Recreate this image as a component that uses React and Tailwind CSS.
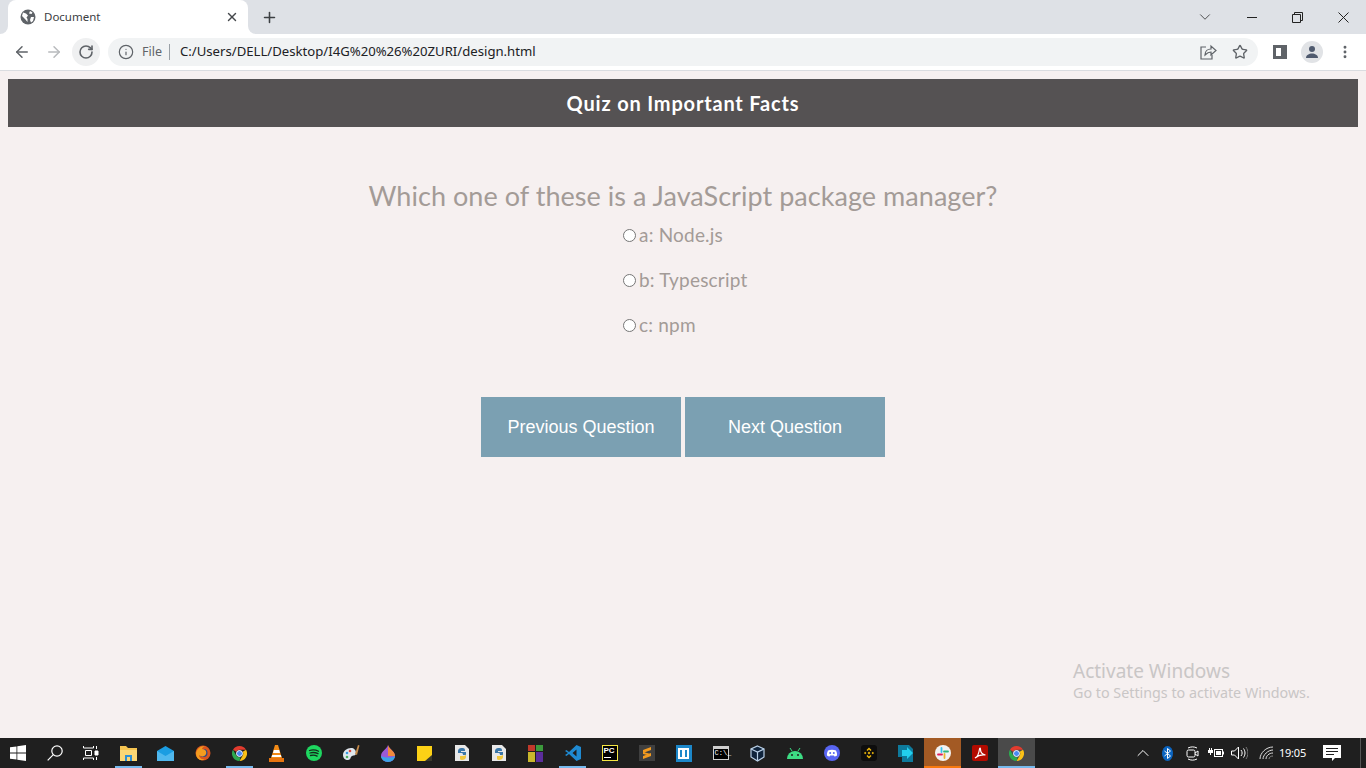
import { ArrowLeft, ArrowRight, RotateCw, Info, Star, X, Plus, ChevronDown, ChevronUp, MoreVertical } from 'lucide-react';

const ChromeLogo = ({ size = 16 }) => (
  <svg width={size} height={size} viewBox="0 0 16 16">
    <path d="M8 0a8 8 0 0 1 6.93 4H8a4 4 0 0 0-3.46 2L1.07 4A8 8 0 0 1 8 0z" fill="#e33b2e" />
    <path d="M14.93 4A8 8 0 0 1 8 16l3.46-6A4 4 0 0 0 11.46 6z" fill="#fbc116" />
    <path d="M8 16A8 8 0 0 1 1.07 4l3.47 6A4 4 0 0 0 9 11.87z" fill="#2da94f" />
    <circle cx="8" cy="8" r="3.2" fill="#4a8af4" stroke="#fff" strokeWidth="1" />
  </svg>
);

const PythonFile = () => (
  <svg width="16" height="18" viewBox="0 0 16 18">
    <path d="M1 1h10l4 4v12H1z" fill="#e8e8e8" />
    <path d="M4 8c0-3 1-4 4-4s3 1 3 3H7v1h5v3H9c0-2-1-2-2-2H4z" fill="#3b77a8" />
    <path d="M6 12h3c2 0 3-1 3-2v3c0 2-2 3-4 3s-2-1-2-2z" fill="#f2c83c" />
  </svg>
);

const taskIcons = [
  { key: 'explorer', bar: true, icon: (
    <svg width="17" height="15" viewBox="0 0 17 15"><path d="M0 0h6l2 2h9v13H0z" fill="#f5c451" /><path d="M0 4h17v11H0z" fill="#fbd775" /><path d="M5 9h7v6H5z" fill="#2d8fd5" /><path d="M7 11h3v4H7z" fill="#fbd775" /></svg>
  ) },
  { key: 'mail', icon: (
    <svg width="17" height="15" viewBox="0 0 17 15"><path d="M0 5l8.5-5L17 5v10H0z" fill="#1b9de2" /><path d="M0 5l8.5 5L17 5v10H0z" fill="#50b8ee" /></svg>
  ) },
  { key: 'firefox', icon: (
    <svg width="16" height="16" viewBox="0 0 16 16"><circle cx="8" cy="8" r="7.5" fill="#d9541e" /><circle cx="8.5" cy="8" r="4" fill="#2d4a86" /><path d="M1 8c1-4 4-7 9-7-2 1-3 2-3 3 3 0 5 2 4 5-1 3-5 3-7 1 0 3 3 5 6 4-4 3-9 0-9-6z" fill="#f39c1f" /></svg>
  ) },
  { key: 'chrome', bar: true, icon: <ChromeLogo size={15} /> },
  { key: 'vlc', icon: (
    <svg width="15" height="17" viewBox="0 0 15 17"><path d="M6 0h3l4 13H2z" fill="#f28a16" /><path d="M4.8 5h5.4l.8 3H4z" fill="#fff" /><path d="M0 13h15v4H0z" fill="#e8750f" /><path d="M3.2 10h8.6l.6 2H2.6z" fill="#fff" /></svg>
  ) },
  { key: 'spotify', icon: (
    <svg width="16" height="16" viewBox="0 0 16 16"><circle cx="8" cy="8" r="8" fill="#1ed760" /><path d="M3.5 5.5c3-1 6-.8 9 .8M4 8c2.6-.8 5.4-.6 8 .7M4.5 10.5c2.2-.6 4.5-.5 6.6.6" fill="none" stroke="#14291c" strokeWidth="1.3" strokeLinecap="round" /></svg>
  ) },
  { key: 'paint', icon: (
    <svg width="18" height="17" viewBox="0 0 18 17"><path d="M1 10c0-4 4-7 8-7 3 0 5 2 5 5s-2 2-4 3-1 4-4 4-5-2-5-5z" fill="#dfe7ee" /><circle cx="5" cy="8" r="1.3" fill="#3b9ae0" /><circle cx="8" cy="6" r="1.3" fill="#e0483c" /><circle cx="5" cy="12" r="1.3" fill="#4db060" /><path d="M13 9l3-9 1.5.5L15 10z" fill="#c58a4a" /></svg>
  ) },
  { key: 'drop', icon: (
    <svg width="14" height="17" viewBox="0 0 14 17"><path d="M7 0c1 4 7 6 7 11a7 6 0 0 1-14 0C0 6 6 4 7 0z" fill="#9c5ad6" /><path d="M7 0c1 4 7 6 7 11H7z" fill="#f08a3c" /><path d="M0 11a7 6 0 0 0 14 0c-4 2-9 2-14 0z" fill="#3aa5e8" /></svg>
  ) },
  { key: 'notes', icon: (
    <svg width="15" height="15" viewBox="0 0 15 15"><path d="M0 0h15v15H0z" fill="#fcd116" /><path d="M15 9v6H8z" fill="#3a3a2c" /></svg>
  ) },
  { key: 'py1', icon: <PythonFile /> },
  { key: 'py2', icon: <PythonFile /> },
  { key: 'winrar', icon: (
    <svg width="15" height="17" viewBox="0 0 15 17"><path d="M0 0h7v6H0z" fill="#c0392b" /><path d="M8 0h7v6H8z" fill="#3c9a3c" /><path d="M0 7h7v10H0z" fill="#c9b72c" /><path d="M8 7h7v10H8z" fill="#5b2d9c" /></svg>
  ) },
  { key: 'vscode', bar: true, icon: (
    <svg width="16" height="16" viewBox="0 0 16 16"><path d="M11.5 0L16 2v12l-4.5 2L4 9l-2.500 2L0 10l3-2-3-2 1.500-1L4 7zM11.5 4.500L7.500 8l4 3.500z" fill="#1f8ad2" /></svg>
  ) },
  { key: 'pycharm', icon: (
    <div className="w-[16px] h-[16px] bg-black border border-[#f5e642] flex flex-col pl-[1px] text-white text-[8px] leading-[9px] font-bold font-['Liberation_Sans',sans-serif]">
      PC
      <span className="block w-[7px] h-[1px] mt-[2px] bg-white"></span>
    </div>
  ) },
  { key: 'sublime', icon: (
    <div className="w-[16px] h-[16px] bg-[#3f3f3f] flex items-center justify-center">
      <svg width="8" height="12" viewBox="0 0 8 12"><path d="M0 3l8-3v3L0 6zM0 9l8-3v3l-8 3zM0 5l8 2v2L0 7z" fill="#f29a1f" /></svg>
    </div>
  ) },
  { key: 'bracket', icon: (
    <div className="w-[16px] h-[17px] bg-[#1c87c9] flex items-center justify-center">
      <div className="w-[11px] h-[11px] border-2 border-white flex justify-center"><span className="w-[3px] bg-white"></span></div>
    </div>
  ) },
  { key: 'cmd', icon: (
    <div className="w-[16px] h-[14px] bg-black border border-[#cfcfcf] border-t-[3px] text-white text-[7px] leading-[9px] pl-[1px] font-['Liberation_Mono',monospace]">C:\_</div>
  ) },
  { key: 'vbox', icon: (
    <svg width="15" height="17" viewBox="0 0 15 17"><path d="M7.5 1L14 4v8l-6.500 4L1 12V4z" fill="#10243c" stroke="#b8cfe6" strokeWidth="1.2" /><path d="M1 4l6.500 3L14 4M7.500 7v9" fill="none" stroke="#b8cfe6" strokeWidth="1.2" /></svg>
  ) },
  { key: 'android', icon: (
    <svg width="16" height="12" viewBox="0 0 16 12"><path d="M0 12a8 8 0 0 1 16 0z" fill="#3ddc84" /><path d="M3 1l2 3M13 1l-2 3" stroke="#3ddc84" strokeWidth="1" /><circle cx="5" cy="8" r="1" fill="#1f1f1f" /><circle cx="11" cy="8" r="1" fill="#1f1f1f" /></svg>
  ) },
  { key: 'discord', icon: (
    <svg width="16" height="16" viewBox="0 0 16 16"><circle cx="8" cy="8" r="8" fill="#5865f2" /><path d="M4 5.500c2.500-1 5.500-1 8 0 1 2 1.200 3.500 1 5-1 .7-2 1-2.500 1l-.6-1H6.100l-.6 1c-.5 0-1.500-.3-2.500-1-.2-1.500 0-3 1-5z" fill="#fff" /><circle cx="6.200" cy="8" r="1" fill="#5865f2" /><circle cx="9.800" cy="8" r="1" fill="#5865f2" /></svg>
  ) },
  { key: 'binance', icon: (
    <svg width="16" height="16" viewBox="0 0 16 16"><rect width="16" height="16" rx="3" fill="#0d0d0d" /><path d="M8 2.500l2.500 2.500-1 1L8 4.500 6.500 6l-1-1zM8 13.500L5.500 11l1-1L8 11.500 9.500 10l1 1zM3 8l1.200-1.200L5.400 8 4.200 9.200zM10.600 8l1.200-1.200L13 8l-1.200 1.200zM8 6.600L9.400 8 8 9.400 6.600 8z" fill="#f0b90b" /></svg>
  ) },
  { key: 'ms', icon: (
    <svg width="15" height="17" viewBox="0 0 15 17"><path d="M0 0h11l4 4v13H4V12H0z" fill="#0e7a9c" /><path d="M4 5h5V2l6 6-6 6v-3H4z" fill="#22d0ee" /></svg>
  ) },
  { key: 'slack', active: 'bg-[#a35a24]', line: 'bg-[#f7780f]', icon: (
    <svg width="16" height="16" viewBox="0 0 16 16"><circle cx="8" cy="8" r="8" fill="#f2f2f2" /><path d="M6.500 3v4" stroke="#36c5f0" strokeWidth="1.800" strokeLinecap="round" /><path d="M13 6.500H9" stroke="#2eb67d" strokeWidth="1.800" strokeLinecap="round" /><path d="M9.500 13V9" stroke="#ecb22e" strokeWidth="1.800" strokeLinecap="round" /><path d="M3 9.500h4" stroke="#e01e5a" strokeWidth="1.800" strokeLinecap="round" /></svg>
  ) },
  { key: 'acrobat', icon: (
    <div className="w-[16px] h-[16px] rounded-[2px] bg-[#b30b00] flex items-center justify-center">
      <svg width="12" height="12" viewBox="0 0 12 12"><path d="M1 11c2-1 4-5 4.500-9 .2-1.500 1-1 1 .5 0 3 2 5 5 5.500-3-.5-7 0-10.500 3z" fill="none" stroke="#fff" strokeWidth="1.200" /></svg>
    </div>
  ) },
  { key: 'chrome2', active: 'bg-[#4a4a4a]', line: 'bg-[#76b9ed]', icon: <ChromeLogo size={15} /> },
];

const App = () => {
  return (
    <div className="relative h-[768px] w-[1366px] overflow-hidden flex flex-col bg-[#f6f0f0] font-['Noto_Sans',sans-serif]">
      {/* tab strip */}
      <div className="h-[34px] bg-[#dee1e6] flex shrink-0">
        <div className="relative ml-[8px] w-[240px] h-[34px] bg-white rounded-t-[8px] flex items-center pl-[12px] pr-[9px] text-[#3c4043]">
          <span className="absolute left-[-8px] bottom-0 w-[8px] h-[8px] bg-white">
            <span className="block w-[8px] h-[8px] bg-[#dee1e6] rounded-br-[8px]"></span>
          </span>
          <span className="absolute right-[-8px] bottom-0 w-[8px] h-[8px] bg-white">
            <span className="block w-[8px] h-[8px] bg-[#dee1e6] rounded-bl-[8px]"></span>
          </span>
          <svg width="16" height="16" viewBox="0 0 16 16" className="mr-[8px]">
            <circle cx="8" cy="8" r="7.500" fill="#5f6368" />
            <path d="M3 3.500l3 1 2 2-1.500 2 1 1.500v3L5 10 2 7zM10 2l2.500 1.500-1 1.500-2.500-.5zM11 8h3l-1 4-2 1.500-1-2.500z" fill="#fff" />
          </svg>
          <span className="text-[11.5px] leading-none flex-1">Document</span>
          <X size={14} strokeWidth={2.4} className="text-[#45484c]" />
        </div>
        <div className="ml-[13px] flex items-center"><Plus size={17} strokeWidth={2.2} className="text-[#3c4043]" /></div>
        <div className="ml-auto flex items-center text-[#222]">
          <div className="w-[46px] flex justify-center"><ChevronDown size={18} strokeWidth={1} /></div>
          <div className="w-[46px] flex justify-center"><span className="w-[10px] h-[1px] bg-[#222] ml-[1px]"></span></div>
          <div className="w-[46px] flex justify-center">
            <svg width="11" height="11" viewBox="0 0 11 11" fill="none" stroke="#222"><path d="M.5 2.500h8v8h-8zM2.500 2.500V.5h8v8H8.500" /></svg>
          </div>
          <div className="w-[46px] flex justify-center">
            <svg width="11" height="11" viewBox="0 0 11 11" fill="none" stroke="#222"><path d="M.5.5l10 10M10.500.5l-10 10" /></svg>
          </div>
        </div>
      </div>

      {/* toolbar */}
      <div className="h-[37px] bg-white border-b border-[#dadce0] flex items-center shrink-0 pb-[1px]">
        <ArrowLeft size={18} strokeWidth={2} className="ml-[13px] text-[#5f6368]" />
        <ArrowRight size={18} strokeWidth={2} className="ml-[14px] text-[#b8babd]" />
        <div className="ml-[9px] w-[28px] h-[28px] rounded-full bg-[#eff0f1] flex items-center justify-center">
          <RotateCw size={16} strokeWidth={2.4} className="text-[#5f6368]" />
        </div>
        <div className="ml-[8px] w-[1150px] h-[28px] rounded-full bg-[#f1f3f4] flex items-center pl-[10px] pr-[10px]">
          <Info size={16} strokeWidth={1.8} className="text-[#5f6368]" />
          <span className="ml-[8px] pt-[1px] text-[12.5px] text-[#5f6368]">File</span>
          <span className="ml-[7px] w-[1px] h-[16px] bg-[#9aa0a6]"></span>
          <span className="ml-[10px] pt-[1px] text-[13.15px] text-[#202124]">C:/Users/DELL/Desktop/I4G%20%26%20ZURI/design.html</span>
          <div className="ml-auto flex items-center gap-[15px]">
            <svg width="17" height="16" viewBox="0 0 17 16" fill="none" stroke="#5f6368" strokeWidth="1.2"><path d="M6 3H1v12h11v-4" /><path d="M5 11c0-4 3-6 6-6V2l5 4.500-5 4.500V8c-3 0-4 1-6 3z" /></svg>
            <Star size={16} strokeWidth={2} className="text-[#5f6368]" />
          </div>
        </div>
        <div className="ml-[15px] w-[14px] h-[14px] border-[3px] border-[#5f6368] border-r-[6px]"></div>
        <div className="ml-[14px] w-[22px] h-[22px] rounded-full bg-[#e1e3e6] flex items-center justify-center">
          <svg width="14" height="14" viewBox="0 0 14 14" fill="#4f5a6e"><circle cx="7" cy="4" r="3" /><path d="M1 13c0-3 3-4.500 6-4.500s6 1.500 6 4.500z" /></svg>
        </div>
        <MoreVertical size={16} strokeWidth={2.4} className="ml-[14px] text-[#5f6368]" />
      </div>

      {/* page */}
      <div className="flex-1 pt-[8px] px-[8px] flex flex-col items-center">
        <div className="w-full h-[48px] bg-[#555253] flex items-center justify-center text-white text-[20px] font-['Lato',sans-serif] font-bold tracking-[0.82px]">
          Quiz on Important Facts
        </div>
        <h1 className="mt-[50px] text-[#a39b97] text-[27px] leading-[38px] font-['Lato',sans-serif] tracking-[0.04px]">
          Which one of these is a JavaScript package manager?
        </h1>
        <div className="w-[120px] flex flex-col gap-[19px] mt-[7px] text-[#a39b97] text-[19px] leading-[26px] tracking-[0.2px] font-['Lato',sans-serif]">
          {['a: Node.js', 'b: Typescript', 'c: npm'].map((label) => (
            <label key={label} className="flex items-center gap-[3px] whitespace-nowrap">
              <span className="w-[13px] h-[13px] rounded-full border border-[#767676] bg-white shrink-0"></span>
              {label}
            </label>
          ))}
        </div>
        <div className="mt-[59px] flex gap-[4px]">
          <button className="w-[200px] h-[60px] bg-[#7ba0b2] text-white text-[18px] font-['Liberation_Sans',sans-serif]">Previous Question</button>
          <button className="w-[200px] h-[60px] bg-[#7ba0b2] text-white text-[18px] font-['Liberation_Sans',sans-serif]">Next Question</button>
        </div>
      </div>

      {/* activation watermark */}
      <div className="absolute left-[1073px] top-[658px] text-[#c9c6c6]">
        <div className="text-[19px] leading-[26px]">Activate Windows</div>
        <div className="text-[14.3px] leading-[20px] mt-[-1px]">Go to Settings to activate Windows.</div>
      </div>

      {/* taskbar */}
      <div className="h-[30px] bg-[#1f1f1f] flex items-center shrink-0 text-white">
        <div className="w-[36px] flex justify-center">
          <svg width="16" height="16" viewBox="0 0 16 16" fill="#fff"><path d="M0 2.300l6.500-.9v6.200H0zM7.300 1.300L16 0v7.600H7.300zM0 8.400h6.500v6.200L0 13.700zM7.300 8.400H16V16l-8.700-1.300z" /></svg>
        </div>
        <div className="w-[37px] flex justify-center">
          <svg width="16" height="16" viewBox="0 0 16 16" fill="none" stroke="#fff" strokeWidth="1.2"><circle cx="10" cy="6" r="5.200" /><path d="M6.300 9.700L.7 15.300" /></svg>
        </div>
        <div className="w-[36px] flex justify-center">
          <svg width="16" height="16" viewBox="0 0 16 16" fill="none" stroke="#fff"><path d="M.5 1v2h10V1M.5 15v-2h10v2M2.500 5.500h6v5h-6zM13.500 1v3M13.500 12v3" /><path d="M12 6h3v4h-3z" fill="#fff" /></svg>
        </div>
        <div className="ml-[1px] flex">
          {taskIcons.map((item) => (
            <div key={item.key} className={`relative w-[37px] h-[30px] flex items-center justify-center ${item.active || ''}`}>
              {item.icon}
              {(item.bar || item.line) && (
                <span className={`absolute bottom-0 h-[2px] ${item.line ? `left-0 right-0 ${item.line}` : 'left-[5px] right-[5px] bg-[#76b9ed]'}`}></span>
              )}
            </div>
          ))}
        </div>
        <div className="ml-auto flex items-center h-full">
          <ChevronUp size={20} strokeWidth={1.2} />
          <svg width="11" height="15" viewBox="0 0 11 15" className="ml-[9px]"><ellipse cx="5.500" cy="7.500" rx="5.500" ry="7.500" fill="#0a64c0" /><path d="M2.500 5l6 5-3 2.500v-10l3 2.500-6 5" fill="none" stroke="#fff" /></svg>
          <svg width="13" height="15" viewBox="0 0 13 15" fill="none" stroke="#fff" className="ml-[13px]"><path d="M2 2c3-1.500 6-1.500 9 0M2 13c3 1.500 6 1.500 9 0" /><rect x="1" y="4" width="8" height="7" rx="1.500" /><path d="M9 7l3-2v5l-3-2" /></svg>
          <svg width="16" height="10" viewBox="0 0 16 10" className="ml-[9px]"><path d="M0 2h1V0h1v2h1V0h1v2h1v3H3v2H2V5H0z" fill="#fff" /><rect x="6.500" y="1.500" width="8" height="7" fill="none" stroke="#fff" /><rect x="8" y="3" width="5" height="4" fill="#fff" /><rect x="15" y="3.500" width="1" height="3" fill="#fff" /></svg>
          <svg width="17" height="14" viewBox="0 0 17 14" fill="none" stroke="#fff" className="ml-[7px]"><path d="M.5 5v4h3l4 4V1l-4 4zM10 4c1.500 2 1.500 4 0 6M12.500 2.500c2 3 2 6 0 9" /><path d="M15 1c2.500 4 2.500 8 0 12" stroke="#777" /></svg>
          <svg width="15" height="14" viewBox="0 0 15 14" fill="none" stroke="#ddd" className="ml-[11px]"><path d="M1 13C1 7 7 1 14 1M4 13c0-4 5-9 10-9M7 13c0-3 3-6 7-6" /><path d="M10 13c0-2 2-3 4-3" stroke="#888" /></svg>
          <span className="ml-[5px] text-[11px] tracking-[-0.2px]">19:05</span>
          <svg width="18" height="17" viewBox="0 0 18 17" className="ml-[17px]"><path d="M0 0h18v13h-6l-3 3v-3H0z" fill="#fff" /><path d="M3 3.500h12M3 6.500h12M3 9.500h8" stroke="#1f1f1f" /></svg>
          <span className="ml-[19px] w-[1px] h-full bg-[#555]"></span>
          <span className="w-[5px]"></span>
        </div>
      </div>
    </div>
  );
};

export default App;
